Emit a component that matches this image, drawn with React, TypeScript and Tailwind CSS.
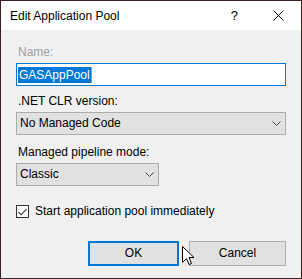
import React from "react";

const font = { fontFamily: '"Liberation Sans", Arial, sans-serif' };

const Chevron = () => (
  <svg width="9" height="5" viewBox="0 0 9 5" className="shrink-0">
    <path d="M0.5 0.5 L4.5 4.5 L8.5 0.5" fill="none" stroke="#404040" strokeWidth="1" />
  </svg>
);

const Select = ({ value, width }: { value: string; width: string }) => (
  <div
    className={`${width} flex h-[23px] items-center justify-between border border-[#adadad] bg-[#e1e1e1] pl-[3px] pr-[4px] text-[12px] text-black`}
  >
    <span>{value}</span>
    <Chevron />
  </div>
);

const Cursor = () => (
  <svg
    width="13"
    height="20"
    viewBox="0 0 13 20"
    className="absolute left-[182px] top-[246px]"
  >
    <path
      d="M0.5 0.5 L0.5 16.5 L4.5 12.5 L7 18.5 L9.5 17.5 L7 11.5 L12 11.5 Z"
      fill="#fff"
      stroke="#000"
      strokeWidth="1"
      strokeLinejoin="miter"
    />
  </svg>
);

export default function App() {
  return (
    <div className="relative h-[279px] w-[302px] overflow-hidden" style={font}>
      <div className="flex h-full w-full flex-col border border-[#3b1f22] bg-[#f0f0f0]">
        {/* title bar */}
        <div className="flex h-[29px] items-center bg-white pl-[9px] text-[12px] text-black">
          <span className="flex-1">Edit Application Pool</span>
          <span className="mr-[17px] text-[13px]">?</span>
          <div className="flex w-[46px] justify-center">
            <svg width="11" height="11" viewBox="0 0 11 11">
              <path d="M0.5 0.5 L10.5 10.5 M10.5 0.5 L0.5 10.5" stroke="#000" strokeWidth="1" />
            </svg>
          </div>
        </div>

        {/* body */}
        <div className="flex flex-1 flex-col px-[15px] text-[12px] leading-[15px] text-black">
          <div className="mt-[15px] pl-[2px] text-[#a0a0a0]">Name:</div>
          <div className="mt-[3px] flex h-[23px] w-[270px] items-center border border-[#0078d7] bg-white pl-[1px]">
            <span className="bg-[#0078d7] px-[1px] text-white leading-[16px]">GASAppPool</span>
            <span className="h-[16px] w-px bg-[#e8842f]" />
          </div>

          <div className="mt-[8px] pl-[2px]">.NET CLR version:</div>
          <div className="mt-[3px]">
            <Select value="No Managed Code" width="w-[270px]" />
          </div>

          <div className="mt-[10px] pl-[2px]">Managed pipeline mode:</div>
          <div className="mt-[3px]">
            <Select value="Classic" width="w-[143px]" />
          </div>

          <div className="mt-[18px] flex items-center gap-[6px]">
            <div className="flex h-[13px] w-[13px] items-center justify-center border border-[#333] bg-white">
              <svg width="9" height="8" viewBox="0 0 9 8">
                <path d="M0.5 4 L3.2 6.8 L8.5 0.8" fill="none" stroke="#333" strokeWidth="1.1" />
              </svg>
            </div>
            <span>Start application pool immediately</span>
          </div>

          <div className="mt-[22px] flex gap-[10px] pl-[72px]">
            <button className="flex h-[25px] w-[91px] items-center justify-center border-2 border-[#0078d7] bg-[#e1e1e1] text-[12px]">
              OK
            </button>
            <button className="flex h-[25px] w-[97px] items-center justify-center border border-[#adadad] bg-[#e1e1e1] text-[12px]">
              Cancel
            </button>
          </div>
        </div>
      </div>
      <Cursor />
    </div>
  );
}
